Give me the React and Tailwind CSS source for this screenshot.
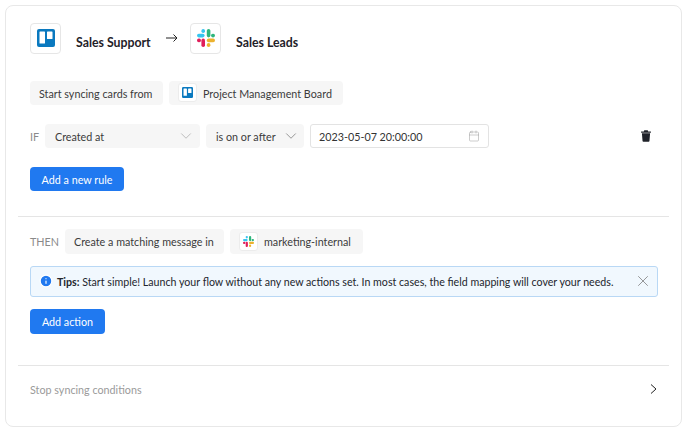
import { X, Info, ChevronDown, Calendar } from "lucide-react";

function TrelloIcon({ size = 18 }) {
  return (
    <svg width={size} height={size} viewBox="0 0 18 18">
      <rect width="18" height="18" rx="2" fill="#0a79bf" />
      <rect x="2.5" y="2.5" width="5.5" height="12" rx="0.6" fill="#fff" />
      <rect x="10" y="2.5" width="5.5" height="7.5" rx="0.6" fill="#fff" />
    </svg>
  );
}

function SlackIcon({ size = 18 }) {
  return (
    <svg width={size} height={size} viewBox="0 0 18 18">
      <rect x="0" y="4.8" width="7.6" height="3.6" rx="1.8" fill="#36c5f0" />
      <rect x="4.4" y="0" width="3.6" height="4" rx="1.8" fill="#36c5f0" />
      <rect x="9.8" y="0" width="3.6" height="8.4" rx="1.8" fill="#2eb67d" />
      <rect x="14" y="4.8" width="4" height="3.6" rx="1.8" fill="#2eb67d" />
      <rect x="9.8" y="9.6" width="8.2" height="3.6" rx="1.8" fill="#ecb22e" />
      <rect x="9.8" y="14" width="3.6" height="4" rx="1.8" fill="#ecb22e" />
      <rect x="4.4" y="9.6" width="3.6" height="8.4" rx="1.8" fill="#e01e5a" />
      <rect x="0" y="9.6" width="4" height="3.6" rx="1.8" fill="#e01e5a" />
    </svg>
  );
}

function IconBox({ children, small }) {
  return (
    <div
      className={
        small
          ? "flex h-[19px] w-[19px] items-center justify-center rounded-[3px] border border-[#ececec] bg-white"
          : "flex h-[31px] w-[31px] items-center justify-center rounded-[4px] border border-[#e6e6e6] bg-white"
      }
    >
      {children}
    </div>
  );
}

function Chip({ children, className = "" }) {
  return (
    <div className={"flex items-center rounded-[4px] bg-[#f6f6f6] text-[#3b3b3b] " + className}>
      {children}
    </div>
  );
}

export default function App() {
  return (
    <div
      className="h-[431px] w-[688px] bg-white pl-[5px] pt-[5px] text-[10.75px] text-[#333]"
      style={{ fontFamily: '"Lato", sans-serif' }}
    >
      <div className="h-[422px] w-[677px] rounded-[8px] border-[1.5px] border-[#e8e8e8] px-[12px]">
        <div className="px-[12px] pt-[16.5px]">
          <div className="flex h-[31px] items-center">
            <IconBox>
              <TrelloIcon />
            </IconBox>
            <span className="ml-[15px] mt-[10px] w-[75px] whitespace-nowrap text-[12.3px] font-bold text-[#1f2229]">Sales Support</span>
            <svg className="ml-[15px] mb-[1px]" width="12" height="10" viewBox="0 0 12 10" fill="none" stroke="#222" strokeWidth="1">
              <path d="M0 5h11M7.5 1.5 11 5 7.5 8.5" />
            </svg>
            <div className="ml-[12px]">
              <IconBox>
                <SlackIcon />
              </IconBox>
            </div>
            <span className="ml-[15px] mt-[10px] whitespace-nowrap text-[12.3px] font-bold text-[#1f2229]">Sales Leads</span>
          </div>

          <div className="mt-[27px] flex h-[24.5px] gap-[6px]">
            <Chip className="w-[133px] pl-[9px]">
              <span className="pt-[2px]">Start syncing cards from</span>
            </Chip>
            <Chip className="w-[174px] pl-[9px]">
              <IconBox small>
                <TrelloIcon size={11} />
              </IconBox>
              <span className="ml-[6px] pt-[2px]">Project Management Board</span>
            </Chip>
          </div>

          <div className="mt-[18.5px] flex h-[24.5px] items-stretch">
            <span className="flex w-[15px] items-center pt-[2px] text-[#8a8a8a]">IF</span>
            <Chip className="w-[155px] justify-between pl-[10px] pr-[5.5px]">
              <span className="pt-[2px]">Created at</span>
              <ChevronDown size={18} strokeWidth={1} className="text-[#aaa]" />
            </Chip>
            <Chip className="ml-[6px] w-[98px] justify-between pl-[10px] pr-[4.5px]">
              <span className="pt-[2px]">is on or after</span>
              <ChevronDown size={18} strokeWidth={1} className="text-[#777]" />
            </Chip>
            <div className="ml-[6px] flex w-[179px] items-center justify-between rounded-[3px] border border-[#e3e3e3] pl-[8px] pr-[8px] text-[#333]">
              <span className="pt-[2px]">2023-05-07 20:00:00</span>
              <Calendar size={12} strokeWidth={1} className="text-[#999]" />
            </div>
            <svg className="ml-[151.5px] self-center" width="10" height="12" viewBox="0 0 11 13" fill="#1f2229">
              <path d="M3.6 0.3h3.8l.5 1.2h3v1.3H.1V1.5h3zM1 3.6h9l-.7 8.5a.9.9 0 0 1-.9.8H2.6a.9.9 0 0 1-.9-.8z" />
            </svg>
          </div>

          <button className="mt-[18.5px] block h-[24.5px] w-[94px] rounded-[4px] bg-[#2079f0] pt-[2px] text-center text-white">
            Add a new rule
          </button>
        </div>

        <div className="mt-[24.5px] border-t border-[#e5e5e5] px-[12px] pt-[12px]">
          <div className="flex h-[25px] items-stretch">
            <span className="flex w-[35px] items-center pt-[2px] text-[#8a8a8a]">THEN</span>
            <Chip className="w-[159px] pl-[9px]">
              <span className="pt-[2px]">Create a matching message in</span>
            </Chip>
            <Chip className="ml-[6px] w-[133px] pl-[9px]">
              <IconBox small>
                <SlackIcon size={11} />
              </IconBox>
              <span className="ml-[6px] pt-[2px]">marketing-internal</span>
            </Chip>
          </div>

          <div className="mt-[12px] flex h-[31px] w-[628px] items-center rounded-[3px] border border-[#b9d8f5] bg-[#f1f8fe] pl-[8px] pr-[5.5px] text-[10.65px] text-[#23262d]">
            <Info size={14} fill="#2079f0" stroke="#fff" strokeWidth={2} className="shrink-0" />
            <span className="ml-[4px] whitespace-nowrap pt-[2px]">
              <b>Tips:</b> Start simple! Launch your flow without any new actions set. In most cases, the field mapping will cover your needs.
            </span>
            <X size={18} strokeWidth={1} className="ml-auto shrink-0 text-[#777]" />
          </div>

          <button className="mt-[12px] block h-[25px] w-[75px] rounded-[4px] bg-[#2079f0] pt-[2px] text-center text-white">
            Add action
          </button>
        </div>

        <div className="mt-[31px] flex h-[48px] items-center justify-between border-t border-[#e5e5e5] pl-[12px] pr-[12.5px]">
          <span className="pt-[2px] text-[#9a9a9a]">Stop syncing conditions</span>
          <svg width="7" height="10" viewBox="0 0 7 10" fill="none" stroke="#222" strokeWidth="1">
            <path d="M1 0.5 6 5 1 9.5" />
          </svg>
        </div>
      </div>
    </div>
  );
}
